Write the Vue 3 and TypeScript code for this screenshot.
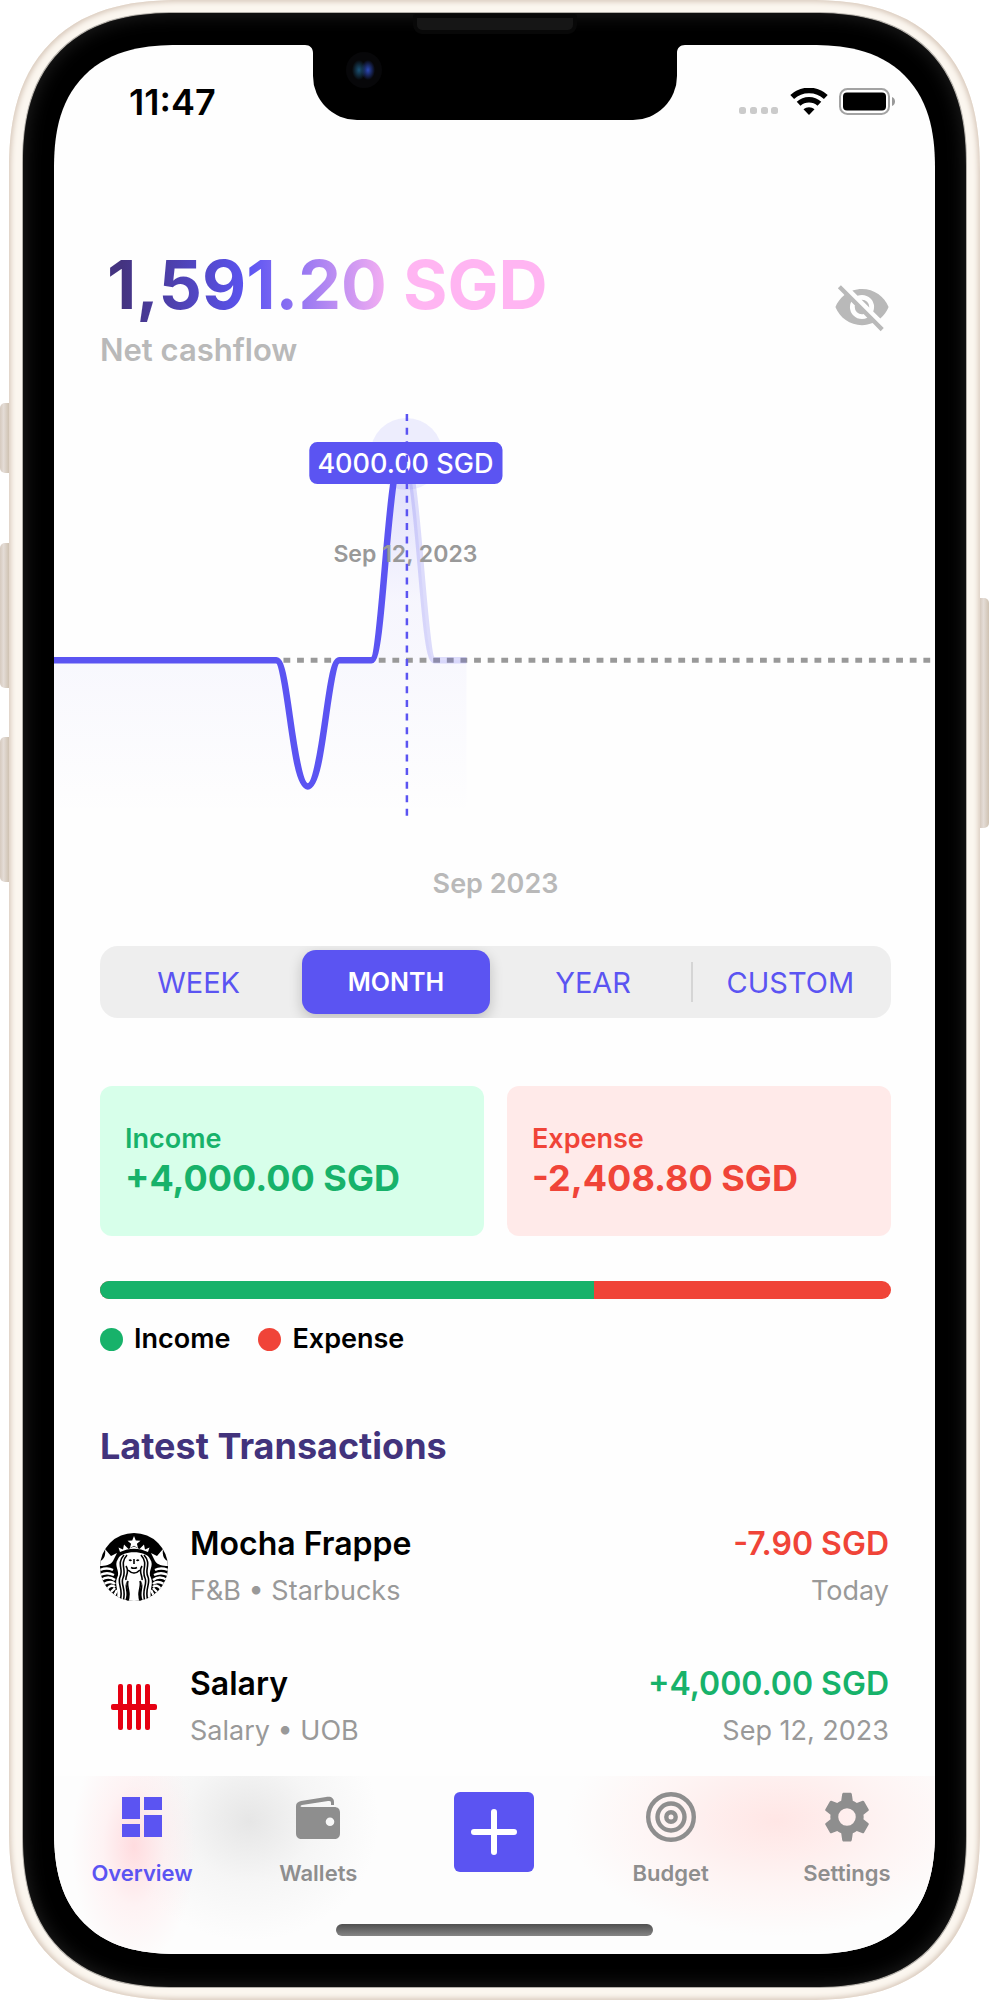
<script setup lang="ts">
import { computed, ref } from 'vue'

type Tone = 'income' | 'expense'

interface Transaction {
  id: number
  title: string
  detail: string
  amount: string
  date: string
  tone: Tone
  logo: 'siren' | 'bank'
}

const periods = ['WEEK', 'MONTH', 'YEAR', 'CUSTOM']
const period = ref('MONTH')
const tab = ref('Overview')

const income = 4000
const expense = 2408.8
const incomeShare = computed(() => (income / (income + expense)) * 100)

const cards: { label: string; amount: string; tone: Tone }[] = [
  { label: 'Income', amount: '+4,000.00 SGD', tone: 'income' },
  { label: 'Expense', amount: '-2,408.80 SGD', tone: 'expense' },
]

const transactions: Transaction[] = [
  { id: 1, title: 'Mocha Frappe', detail: 'F&B • Starbucks', amount: '-7.90 SGD', date: 'Today', tone: 'expense', logo: 'siren' },
  { id: 2, title: 'Salary', detail: 'Salary • UOB', amount: '+4,000.00 SGD', date: 'Sep 12, 2023', tone: 'income', logo: 'bank' },
]

const past =
  'M0 260H222C234 260 238 386 253.500 386C269 386 273 260 285 260H317C329 260 333 53 348.500 53'
const upcoming = 'M348.500 53C364 53 368 260 380 260H412'
const area = past + 'C364 53 368 260 380 260H412V416H0Z'
</script>

<template>
  <div class="device">
    <span class="key key-mute"></span>
    <span class="key key-up"></span>
    <span class="key key-down"></span>
    <span class="key key-power"></span>
    <div class="frame">
      <div class="bezel">
        <span class="speaker"></span>
        <div class="notch">
          <svg class="notch-edge left" viewBox="0 0 8 8" aria-hidden="true"><path d="M0 0H8V8C8 3 5 0 0 0Z" /></svg>
          <svg class="notch-edge right" viewBox="0 0 8 8" aria-hidden="true"><path d="M8 0H0V8C0 3 3 0 8 0Z" /></svg>
          <span class="camera"></span>
        </div>
        <div class="screen">
          <div class="status">
            <time>11:47</time>
            <div class="status-icons">
              <svg width="40" height="28" viewBox="0 0 40 28" aria-hidden="true">
                <g fill="#cbcbcb">
                  <rect x="0" y="19" width="7" height="7" rx="2.500" />
                  <rect x="11" y="19" width="7" height="7" rx="2.500" />
                  <rect x="22" y="19" width="7" height="7" rx="2.500" />
                  <rect x="32" y="19" width="7" height="7" rx="2.500" />
                </g>
              </svg>
              <svg width="38" height="28" viewBox="0 0 38 28" aria-hidden="true">
                <g fill="none" stroke="#000" stroke-width="5.500">
                  <path d="M2.200 9C11.500 .200 26.500 .200 35.800 9" />
                  <path d="M8.600 15.700C14.500 10.300 23.500 10.300 29.400 15.700" />
                </g>
                <path d="M19 27L13.500 21.300C16.500 18.400 21.500 18.400 24.500 21.300Z" />
              </svg>
              <svg width="57" height="28" viewBox="0 0 57 28" aria-hidden="true">
                <rect x="1" y="1" width="49" height="25" rx="7.500" fill="none" stroke="#a3a3a3" stroke-width="2" />
                <rect x="4" y="4.500" width="43" height="18" rx="4" />
                <path d="M53 9C57 10.500 57 16.500 53 18Z" fill="#999" />
              </svg>
            </div>
          </div>

          <main>
            <header class="summary">
              <div>
                <h1>1,591.20 SGD</h1>
                <p>Net cashflow</p>
              </div>
              <button type="button" class="hide" aria-label="Hide amounts">
                <svg viewBox="0 0 24 24" width="58" height="58" aria-hidden="true">
                  <path
                    fill="#b9b9b9"
                    d="M11.830 9L15 12.160V12a3 3 0 0 0-3-3h-.170m-4.300.800l1.550 1.550c-.050.210-.080.420-.080.650a3 3 0 0 0 3 3c.220 0 .440-.030.650-.080l1.550 1.550c-.670.330-1.410.530-2.200.530a5 5 0 0 1-5-5c0-.790.200-1.530.530-2.200M2 4.270l2.280 2.280.450.450C3.080 8.300 1.780 10 1 12c1.730 4.390 6 7.500 11 7.500 1.550 0 3.030-.300 4.380-.840l.430.420L19.730 22 21 20.730 3.270 3M12 7a5 5 0 0 1 5 5c0 .640-.130 1.260-.360 1.820l2.930 2.930c1.500-1.250 2.700-2.890 3.430-4.750-1.730-4.390-6-7.500-11-7.500-1.400 0-2.740.250-4 .700l2.170 2.150C10.740 7.130 11.350 7 12 7z"
                  />
                </svg>
              </button>
            </header>

            <svg class="chart" viewBox="0 0 880 430" role="img" aria-label="Cashflow for September 2023">
              <defs>
                <linearGradient id="areaFill" gradientUnits="userSpaceOnUse" x1="0" y1="53" x2="0" y2="416">
                  <stop offset="0" stop-color="#5b54f2" stop-opacity=".2" />
                  <stop offset=".4" stop-color="#5b54f2" stop-opacity=".05" />
                  <stop offset=".6" stop-color="#5b54f2" stop-opacity=".035" />
                  <stop offset="1" stop-color="#5b54f2" stop-opacity="0" />
                </linearGradient>
              </defs>
              <path :d="area" fill="url(#areaFill)" />
              <line x1="0" y1="260" x2="880" y2="260" stroke="#999" stroke-width="5" stroke-dasharray="6.800 6.800" stroke-dashoffset="2" />
              <path :d="upcoming" class="curve upcoming" />
              <path :d="past" class="curve" />
              <circle cx="352" cy="54" r="36" fill="#5b54f2" fill-opacity=".1" />
              <rect x="255" y="42" width="193" height="42" rx="8" fill="#5b54f2" />
              <text x="351" y="73" class="tip">4000.00 SGD</text>
              <text x="351" y="162" class="tip-date">Sep 12, 2023</text>
              <line x1="352.500" y1="14" x2="352.500" y2="416" stroke="#5b54f2" stroke-width="2.500" stroke-dasharray="7 6.600" />
            </svg>
            <p class="range">Sep 2023</p>

            <div class="periods" role="group" aria-label="Period">
              <button
                v-for="name in periods"
                :key="name"
                type="button"
                :class="{ active: name === period }"
                :aria-pressed="name === period"
                @click="period = name"
              >
                {{ name }}
              </button>
            </div>

            <section class="cards" aria-label="Totals">
              <article v-for="card in cards" :key="card.label" class="card" :class="card.tone">
                <h2>{{ card.label }}</h2>
                <p>{{ card.amount }}</p>
              </article>
            </section>

            <div class="split"><span :style="{ width: incomeShare + '%' }"></span></div>
            <ul class="legend">
              <li v-for="card in cards" :key="card.label" :class="card.tone">{{ card.label }}</li>
            </ul>

            <section>
              <h2 class="heading">Latest Transactions</h2>
              <ul class="rows">
                <li v-for="item in transactions" :key="item.id" class="row">
                  <svg v-if="item.logo === 'siren'" class="logo" viewBox="0 0 68 68" aria-hidden="true">
                    <defs>
                      <clipPath id="disc"><circle cx="34" cy="34" r="34" /></clipPath>
                    </defs>
                    <g clip-path="url(#disc)">
                      <rect width="68" height="68" />
                      <g fill="#fff">
                        <path d="M34 3L35.800 7.400L40.500 7.700L36.900 10.700L38.100 15.300L34 12.800L29.900 15.300L31.100 10.700L27.500 7.700L32.200 7.400Z" />
                        <path d="M20 19L18.500 14.500L23 16.500L24 11.500L28.500 16L34 13.500L39.500 16L44 11.500L45 16.500L49.500 14.500L48 19C39 14.500 29 14.500 20 19Z" />
                        <path d="M5 16L11 23L17 20L13 28C11 32 5 33 0 33V28C4 27 6 22 5 16Z" />
                        <path d="M63 16L57 23L51 20L55 28C57 32 63 33 68 33V28C64 27 62 22 63 16Z" />
                        <path d="M18 26C21 17 47 17 50 26C55 33 47 38 51 45C54 52 48 58 52 68H43C39 59 45 54 41 48C38 43 34 40 34 40C34 40 30 43 27 48C23 54 29 59 25 68H16C20 58 14 52 17 45C21 38 13 33 18 26Z" />
                        <path d="M34 40C27 43 25 50 28 56C31 61 28 64 28 68H40C40 64 37 61 40 56C43 50 41 43 34 40Z" />
                      </g>
                      <g fill="none" stroke="#fff" stroke-width="2.400">
                        <path d="M0 37C5 35 9 35 13 37M0 42C6 39 10 40 14 42M1 47C7 43 11 44 15 47M4 51C9 48 12 48 15 51M7 56C10 52 13 52 15 54M10 60L15 55M14 63L17 57" />
                        <path d="M68 37C63 35 59 35 55 37M68 42C62 39 58 40 54 42M67 47C61 43 57 44 53 47M64 51C59 48 56 48 53 51M61 56C58 52 55 52 53 54M58 60L53 55M54 63L51 57" />
                      </g>
                      <g fill="none" stroke="#000" stroke-width="1.600">
                        <path d="M24 22C16 31 24 36 20 44C17 51 24 56 20 68M27 22C19 31 27 37 23 45C20 51 27 57 23 68M26 33C30 39 25 43 26 47" />
                        <path d="M44 22C52 31 44 36 48 44C51 51 44 56 48 68M41 22C49 31 41 37 45 45C48 51 41 57 45 68M42 33C38 39 43 43 42 47" />
                        <path d="M34 26V31M31 34.500C33 35.500 35 35.500 37 34.500" />
                        <path d="M28 37C32 41 36 41 40 37M28 48C26 54 31 57 28 68M40 48C42 54 37 57 40 68" />
                      </g>
                      <path d="M28.500 27C30 26 31 26 32 27.500C31 28.500 29.500 28.500 28.500 27ZM39.500 27C38 26 37 26 36 27.500C37 28.500 38.500 28.500 39.500 27Z" />
                    </g>
                  </svg>
                  <svg v-else class="logo" viewBox="0 0 68 68" aria-hidden="true">
                    <g fill="#e60012">
                      <rect x="18" y="11" width="5" height="46" rx="2" />
                      <rect x="27" y="11" width="5" height="46" rx="2" />
                      <rect x="36" y="11" width="5" height="46" rx="2" />
                      <rect x="45" y="11" width="5" height="46" rx="2" />
                      <rect x="11" y="31" width="46" height="6" rx="2" />
                    </g>
                  </svg>
                  <div class="row-main">
                    <strong>{{ item.title }}</strong>
                    <span>{{ item.detail }}</span>
                  </div>
                  <div class="row-side">
                    <strong :class="item.tone">{{ item.amount }}</strong>
                    <span>{{ item.date }}</span>
                  </div>
                </li>
              </ul>
            </section>
          </main>

          <footer class="dock">
            <nav class="tabs" aria-label="Main">
              <button type="button" :class="{ active: tab === 'Overview' }" @click="tab = 'Overview'">
                <svg viewBox="0 0 50 50" aria-hidden="true">
                  <path d="M5 5H23V27H5ZM27 5H45V18H27ZM5 32H23V45H5ZM27 23H45V45H27Z" />
                </svg>
                Overview
              </button>
              <button type="button" :class="{ active: tab === 'Wallets' }" @click="tab = 'Wallets'">
                <svg viewBox="0 0 50 50" aria-hidden="true">
                  <path
                    fill-rule="evenodd"
                    d="M3 14C3 11 5 10 8 9L33 5C38 4 41 6 41 10V13H38V11C38 9 37 9 35 9L9 13C7 13.500 7 15 9 15H41C45 15 47 17 47 21V41C47 45 45 47 41 47H9C5 47 3 45 3 41ZM37 25.500A4.300 4.300 0 1 0 37 34.100A4.300 4.300 0 1 0 37 25.500Z"
                  />
                </svg>
                Wallets
              </button>
              <button type="button" class="add" aria-label="Add transaction">
                <svg viewBox="0 0 80 80" aria-hidden="true">
                  <path d="M40 20V60M20 40H60" fill="none" stroke="#fff" stroke-width="6" stroke-linecap="round" />
                </svg>
              </button>
              <button type="button" :class="{ active: tab === 'Budget' }" @click="tab = 'Budget'">
                <svg viewBox="0 0 50 50" aria-hidden="true">
                  <g fill="none" stroke="currentColor" stroke-width="4.400">
                    <circle cx="25" cy="25" r="22.800" />
                    <circle cx="25" cy="25" r="13.500" />
                    <circle cx="25" cy="25" r="4.700" />
                  </g>
                </svg>
                Budget
              </button>
              <button type="button" :class="{ active: tab === 'Settings' }" @click="tab = 'Settings'">
                <svg viewBox="0 0 24 24" aria-hidden="true">
                  <path
                    d="M12 16.200A4.200 4.200 0 1 1 12 7.800A4.200 4.200 0 0 1 12 16.200M19.900 13.100C19.960 12.700 20 12.370 20 12C20 11.630 19.960 11.270 19.900 10.900L22.300 9.050C22.500 8.900 22.560 8.600 22.430 8.360L20.170 4.450C20.030 4.200 19.740 4.120 19.500 4.200L16.700 5.330C16.100 4.880 15.480 4.500 14.780 4.220L14.350 1.200C14.310.950 14.100.300 13.800.300H10.200C9.900.300 9.690.950 9.650 1.200L9.220 4.220C8.520 4.500 7.900 4.880 7.300 5.330L4.500 4.200C4.260 4.120 3.970 4.200 3.830 4.450L1.570 8.360C1.440 8.600 1.500 8.900 1.700 9.050L4.100 10.900C4.040 11.270 4 11.630 4 12C4 12.370 4.040 12.700 4.100 13.100L1.700 14.950C1.500 15.100 1.440 15.400 1.570 15.640L3.830 19.550C3.970 19.800 4.260 19.880 4.500 19.800L7.300 18.670C7.900 19.120 8.520 19.500 9.220 19.780L9.650 22.800C9.690 23.050 9.900 23.700 10.200 23.700H13.800C14.100 23.700 14.310 23.050 14.350 22.800L14.780 19.780C15.480 19.500 16.100 19.120 16.700 18.670L19.500 19.800C19.740 19.880 20.030 19.800 20.170 19.550L22.430 15.640C22.560 15.400 22.500 15.100 22.300 14.950Z"
                  />
                </svg>
                Settings
              </button>
            </nav>
            <span class="home"></span>
          </footer>
        </div>
      </div>
    </div>
  </div>
</template>

<style>
body {
  margin: 0;
  background: #fff;
}
</style>

<style scoped>
.device,
.device * {
  box-sizing: border-box;
}
.device {
  position: relative;
  padding: 0 9px;
  font-family: Inter, "Liberation Sans", sans-serif;
  color: #000;
}
h1,
h2,
p,
ul {
  margin: 0;
  padding: 0;
  list-style: none;
}
button {
  margin: 0;
  padding: 0;
  border: 0;
  background: none;
  font: inherit;
  color: inherit;
  cursor: pointer;
}
svg {
  display: block;
}
.key {
  position: absolute;
  left: 0;
  width: 9px;
  background: linear-gradient(90deg, #d6cabf, #e4dcd6 40%, #cfc2b2);
  border-radius: 5px 0 0 5px;
}
.key-mute {
  top: 403px;
  height: 70px;
}
.key-up {
  top: 543px;
  height: 145px;
}
.key-down {
  top: 737px;
  height: 145px;
}
.key-power {
  left: auto;
  right: 0;
  top: 598px;
  height: 230px;
  border-radius: 0 5px 5px 0;
}
.frame {
  padding: 13px 14px;
  border-radius: 152px;
  background: #f8f3ec;
  box-shadow:
    inset 0 0 5px 2px #d9cabd,
    inset 0 0 0 13px #fbf6ef;
}
.bezel {
  position: relative;
  padding: 32px 31px 33px;
  border-radius: 139px;
  background: #000;
  box-shadow:
    0 0 0 1px #b3afa9,
    inset 0 0 20px #222;
}
.speaker {
  position: absolute;
  top: 1px;
  left: 50%;
  width: 164px;
  height: 20px;
  margin-left: -82px;
  border: 4px solid #080808;
  border-radius: 3px 3px 9px 9px;
  background: #161616;
}
.notch {
  position: absolute;
  z-index: 1;
  top: 31px;
  left: 50%;
  width: 364px;
  height: 76px;
  margin-left: -182px;
  background: #000;
  border-radius: 0 0 44px 44px;
}
.notch-edge {
  position: absolute;
  top: 1px;
  width: 8px;
  height: 8px;
}
.notch-edge.left {
  right: 100%;
}
.notch-edge.right {
  left: 100%;
}
.camera {
  position: absolute;
  top: 8px;
  left: 33px;
  width: 36px;
  height: 36px;
  border-radius: 50%;
  background:
    radial-gradient(ellipse 7px 10px at 13px 18px, #1b5275, transparent),
    radial-gradient(ellipse 7px 10px at 22px 18px, #2c49b8, transparent),
    #070709;
}
.screen {
  overflow: hidden;
  border-radius: 108px;
  background: #fefefe;
}
/* Continuous corners where the browser can draw them */
@supports (corner-shape: superellipse(1.3)) {
  .frame {
    border-radius: 172px;
    corner-shape: superellipse(1.3);
  }
  .bezel {
    border-radius: 154px;
    corner-shape: superellipse(1.3);
  }
  .screen {
    border-radius: 124px;
    corner-shape: superellipse(1.3);
  }
}
.status {
  display: flex;
  align-items: center;
  justify-content: space-between;
  height: 113px;
  padding: 0 39px 0 75px;
}
.status time {
  font-size: 36px;
  font-weight: 600;
}
.status-icons {
  display: flex;
  align-items: center;
  gap: 11px;
}
main {
  padding: 86px 44px 27px 46px;
}
.summary {
  display: flex;
  align-items: center;
  justify-content: space-between;
}
.summary h1 {
  padding-left: 7px;
  font-size: 68px;
  line-height: 80px;
  font-weight: 700;
  background: linear-gradient(90deg, #443380 5%, #5b54f2 33%, #ffb5f2 66%);
  -webkit-background-clip: text;
  background-clip: text;
  color: transparent;
}
.summary p {
  margin-top: 6px;
  font-size: 31px;
  line-height: 40px;
  font-weight: 600;
  color: #b9b9b9;
}
.chart {
  width: calc(100% + 90px);
  margin: 30px -44px 0 -46px;
}
.curve {
  fill: none;
  stroke: #5b54f2;
  stroke-width: 6.500px;
}
.upcoming {
  stroke-opacity: 0.2;
}
.chart text {
  text-anchor: middle;
}
.tip {
  font-size: 27px;
  font-weight: 500;
  fill: #fff;
}
.tip-date {
  font-size: 23px;
  font-weight: 600;
  fill: #999;
}
.range {
  margin-top: 36px;
  font-size: 27px;
  line-height: 36px;
  font-weight: 600;
  text-align: center;
  color: #b9b9b9;
}
.periods {
  display: grid;
  grid-template-columns: repeat(4, 1fr);
  height: 72px;
  margin-top: 44px;
  padding-right: 2px;
  overflow: hidden;
  border-radius: 18px;
  background: #eee;
}
.periods button {
  position: relative;
  margin: 4px 5px;
  font-size: 29px;
  color: #5b54f2;
}
.periods button.active {
  border-radius: 14px;
  background: #5b54f2;
  box-shadow: 0 5px 14px rgba(0, 0, 0, 0.2);
  font-size: 25px;
  font-weight: 600;
  color: #fff;
}
.periods button:last-child::before {
  content: "";
  position: absolute;
  top: 12px;
  bottom: 12px;
  left: -6px;
  width: 2px;
  background: #d5d5d5;
}
.cards {
  display: grid;
  grid-template-columns: 1fr 1fr;
  gap: 23px;
  margin-top: 68px;
}
.card {
  padding: 36px 25px;
  border-radius: 12px;
}
.card h2 {
  font-size: 27px;
  line-height: 34px;
  font-weight: 600;
}
.card p {
  font-size: 36px;
  line-height: 44px;
  font-weight: 700;
}
.income {
  color: #17b26a;
}
.expense {
  color: #f04438;
}
.card.income {
  background: #d7ffea;
}
.card.expense {
  background: #ffeae9;
}
.split {
  height: 18px;
  margin-top: 45px;
  overflow: hidden;
  border-radius: 9px;
  background: #f04438;
}
.split span {
  display: block;
  height: 100%;
  background: #17b26a;
}
.legend {
  display: flex;
  gap: 28px;
  margin-top: 23px;
  font-size: 27px;
  line-height: 34px;
  font-weight: 600;
}
.legend li {
  display: flex;
  align-items: center;
  gap: 11px;
  color: #000;
}
.legend li::before {
  content: "";
  width: 23px;
  height: 23px;
  border-radius: 50%;
  background: #17b26a;
}
.legend li.expense::before {
  background: #f04438;
}
.heading {
  margin-top: 68px;
  font-size: 36px;
  line-height: 44px;
  font-weight: 700;
  color: #42337c;
}
.rows {
  display: grid;
  gap: 55px;
  margin-top: 56px;
}
.row {
  display: flex;
  align-items: center;
  padding-right: 2px;
}
.logo {
  flex: none;
  width: 68px;
  height: 68px;
  margin-right: 22px;
}
.row-main,
.row-side {
  display: grid;
  gap: 9px;
}
.row-side {
  margin-left: auto;
  text-align: right;
}
.row strong {
  font-size: 32px;
  line-height: 40px;
  font-weight: 600;
}
.row span {
  font-size: 27px;
  line-height: 36px;
  color: #999;
}
.dock {
  padding: 16px 0 18px;
  background:
    radial-gradient(ellipse 62px 120px at 80px 70px, #ffdcdf, rgba(255, 232, 234, 0.5) 50%, rgba(255, 240, 240, 0)),
    radial-gradient(ellipse 130px 120px at 195px 45px, #e6e6e6, rgba(238, 238, 238, 0.5) 50%, rgba(250, 250, 250, 0)),
    radial-gradient(ellipse 210px 115px at 82% 45px, #ffe6e5, rgba(255, 238, 237, 0.6) 55%, rgba(255, 245, 244, 0)),
    #fdfdfd;
}
.tabs {
  display: grid;
  grid-template-columns: repeat(5, 1fr);
  align-items: start;
  height: 132px;
}
.tabs button {
  display: grid;
  gap: 17px;
  justify-items: center;
  font-size: 22px;
  line-height: 28px;
  font-weight: 600;
  color: #8e8e8e;
}
.tabs button.active {
  color: #5b54f2;
}
.tabs button svg {
  width: 50px;
  height: 50px;
  fill: currentColor;
}
.tabs .add {
  justify-self: center;
  border-radius: 6px;
  background: #5b54f2;
}
.tabs .add svg {
  width: 80px;
  height: 80px;
}
.home {
  display: block;
  width: 36%;
  height: 12px;
  margin: 0 auto;
  border-radius: 6px;
  background: linear-gradient(#505050, #858585);
}
</style>
